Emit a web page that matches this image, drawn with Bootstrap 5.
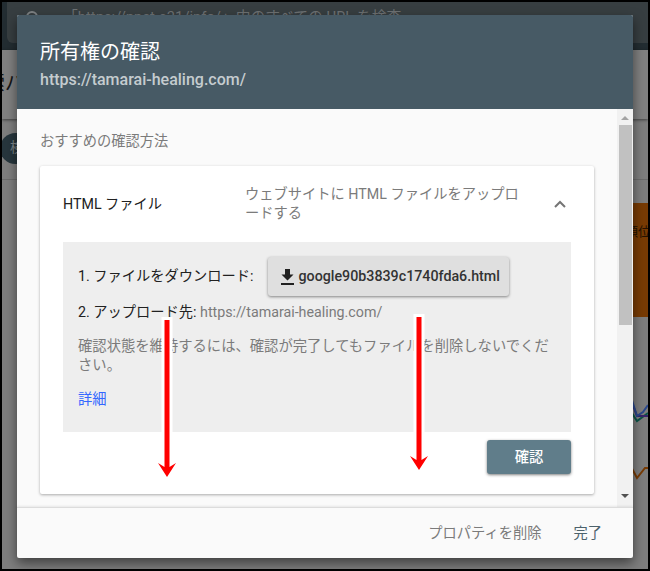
<!DOCTYPE html>
<html lang="ja">
<head>
<meta charset="utf-8">
<meta name="viewport" content="width=device-width, initial-scale=1">
<title>所有権の確認</title>
<link href="https://cdn.jsdelivr.net/npm/bootstrap@5.3.0/dist/css/bootstrap.min.css" rel="stylesheet">
<style>
body{font-family:Roboto,"Noto Sans CJK JP",sans-serif;font-size:14.25px;line-height:19px;color:#212121}
.screen{width:650px;height:571px;border:2px solid #000;background:#7e7e7e}
.app-top{height:48px;background:#232d32;padding-left:5px}
.app-search{height:41px;background:#373e41;border-radius:0 0 0 6px;color:#6d7173;font-size:14.8px;line-height:24px;padding:3px 0 0 17px;gap:19px}
.app-title{height:69px;background:#808080;box-shadow:0 1px 3px rgba(0,0,0,.5);font-size:20px;line-height:66px;color:#151515}
.app-title span{margin-left:-17px}
.app-filter{height:61px;border-bottom:1px solid #6c6c6c;padding-top:14px}
.app-chip{width:90px;height:31px;margin-left:-2px;border-radius:16px;background:#27363d;color:#7e868a;font-size:14px;line-height:29px;padding-left:10px}
.app-tile{width:200px;height:114px;margin-top:23px;background:#783b04;color:#251200;font-size:13px;line-height:58px;white-space:nowrap}
.app-tile span{margin-right:-3px}
.app-chart{display:block;margin-left:auto;margin-top:70px}
.dlg{left:15px;top:13px;width:616px;height:543px;background:#fafafa;box-shadow:0 5px 12px rgba(0,0,0,.5);border-radius:2px}
.dlg-head{height:94px;background:#475a65;border-radius:2px 2px 0 0;padding:23px 23px 0;color:#fff;flex:none}
.dlg-head h1{font-size:20px;line-height:28px;font-weight:400;margin:0}
.dlg-head p{font-size:16px;line-height:27px;font-weight:500;color:#c5cccf;margin:0}
.dlg-main{padding:23px 0 0 23px}
.muted-text{color:#7b7b7b}
.method{width:554px;height:328px;background:#fff;margin-top:15px;padding:0 23px;border-radius:2px;box-shadow:0 1px 3px rgba(0,0,0,.32)}
.method-head{height:76px}
.method-name{width:182px}
.steps{height:190px;background:#eee;padding:15px 15px 0}
.step-two{margin-top:7px}
.keep-note{margin-top:15px;font-size:14.32px}
.btn-file{width:241px;height:39px;background:#dfdfdf;border:0;border-radius:3px;box-shadow:0 1px 3px rgba(0,0,0,.45);font-size:14.25px;font-weight:500;color:#333;padding:0 0 0 13px;margin-left:14px}
.btn-file svg{margin-right:5px}
.btn-verify{width:84px;height:34px;background:#607d8a;border:0;border-radius:3px;box-shadow:0 1px 3px rgba(0,0,0,.5);color:#fff;font-size:14.25px;font-weight:500;line-height:32px;padding:0;margin-top:8px}
.more-link{color:#3367ff;text-decoration:none;margin-top:15px}
.sbar{width:16px;background:#f1f1f1;flex:none;padding-top:6px}
.sbar-thumb{width:13px;height:200px;background:#c1c1c1;margin-top:5px}
.dlg-foot{height:51px;border-top:1px solid #dcdcdc;box-shadow:0 -1px 2px rgba(0,0,0,.08);padding-right:31px;gap:32px;flex:none}
.done-text{color:#4c626c}
.arrow-a{left:155px;top:315px}
.arrow-b{left:407px;top:312px}
</style>
</head>
<body>
<div class="screen position-relative overflow-hidden">
  <div class="app-top">
    <div class="app-search d-flex">
      <svg width="20" height="22" viewBox="0 0 20 22" fill="none" stroke="#7f8385" stroke-width="2"><circle cx="8" cy="12" r="5"/><path d="M12 16l6 6"/></svg>
      <span>「https://pnet-c31/info/」内のすべての URL を検査</span>
    </div>
  </div>
  <div class="app-title overflow-hidden"><span>索パ</span></div>
  <div class="app-filter"><div class="app-chip">検</div></div>
  <div class="app-tile ms-auto text-end"><span>順位</span></div>
  <svg class="app-chart" width="20" height="110" viewBox="0 0 20 110" fill="none" stroke-width="2">
    <path d="M0 20L9 34L20 26" stroke="#0b5548"/>
    <path d="M0 5L9 29H20" stroke="#38246b"/>
    <path d="M0 1L9 29L15 25L20 18" stroke="#2a488d"/>
    <path d="M0 74L9 91L17 81H20" stroke="#783b04"/>
  </svg>

  <div class="dlg position-absolute d-flex flex-column">
    <header class="dlg-head"><h1>所有権の確認</h1><p>https://tamarai-healing.com/</p></header>
    <div class="d-flex flex-grow-1 overflow-hidden">
      <main class="dlg-main flex-grow-1">
        <div class="muted-text">おすすめの確認方法</div>
        <section class="method">
          <div class="method-head d-flex align-items-center">
            <div class="method-name">HTML ファイル</div>
            <div class="muted-text text-nowrap">ウェブサイトに HTML ファイルをアップロ<br>ードする</div>
            <svg class="ms-auto me-1" width="14" height="12" viewBox="0 0 14 12" fill="none" stroke="#757575" stroke-width="2"><path d="M2 9l5-5 5 5"/></svg>
          </div>
          <div class="steps text-nowrap">
            <div class="d-flex align-items-center"><span>1. ファイルをダウンロード:</span>
              <button class="btn btn-file d-flex align-items-center" type="button">
                <svg width="13" height="16" viewBox="0 0 13 16" fill="#212121"><path d="M4 0h5v5.500h3.500L6.500 11.500.5 5.500H4zM0 14h13v2H0z"/></svg>google90b3839c1740fda6.html
              </button>
            </div>
            <div class="step-two">2. アップロード先: <span class="muted-text">https://tamarai-healing.com/</span></div>
            <div class="keep-note muted-text">確認状態を維持するには、確認が完了してもファイルを削除しないでくだ<br>さい。</div>
            <a class="more-link d-inline-block" href="#">詳細</a>
          </div>
          <div class="text-end"><button class="btn btn-verify" type="button">確認</button></div>
        </section>
      </main>
      <div class="sbar d-flex flex-column align-items-center">
        <svg width="8" height="5" viewBox="0 0 8 5" fill="#a3a3a3"><path d="M0 5l4-4 4 4z"/></svg>
        <div class="sbar-thumb"></div>
        <svg class="mt-auto mb-2" width="8" height="5" viewBox="0 0 8 5" fill="#505050"><path d="M0 0h8L4 4z"/></svg>
      </div>
    </div>
    <footer class="dlg-foot d-flex align-items-center justify-content-end"><span class="muted-text">プロパティを削除</span><span class="done-text">完了</span></footer>
  </div>

  <svg class="arrow-a position-absolute" width="20" height="162" viewBox="0 0 20 162"><path d="M4.500 0h11v150h-11z" fill="#fff"/><path d="M7.500 3h5v147l6.500-4L10 160 1 146l6.500 4z" fill="#f00"/></svg>
  <svg class="arrow-b position-absolute" width="20" height="162" viewBox="0 0 20 162"><path d="M4.500 0h11v147h-11z" fill="#fff"/><path d="M7.500 3h5v143l6.500-4L10 156 1 142l6.500 4z" fill="#f00"/></svg>
</div>
<script src="https://cdn.jsdelivr.net/npm/bootstrap@5.3.0/dist/js/bootstrap.bundle.min.js"></script>
</body>
</html>
